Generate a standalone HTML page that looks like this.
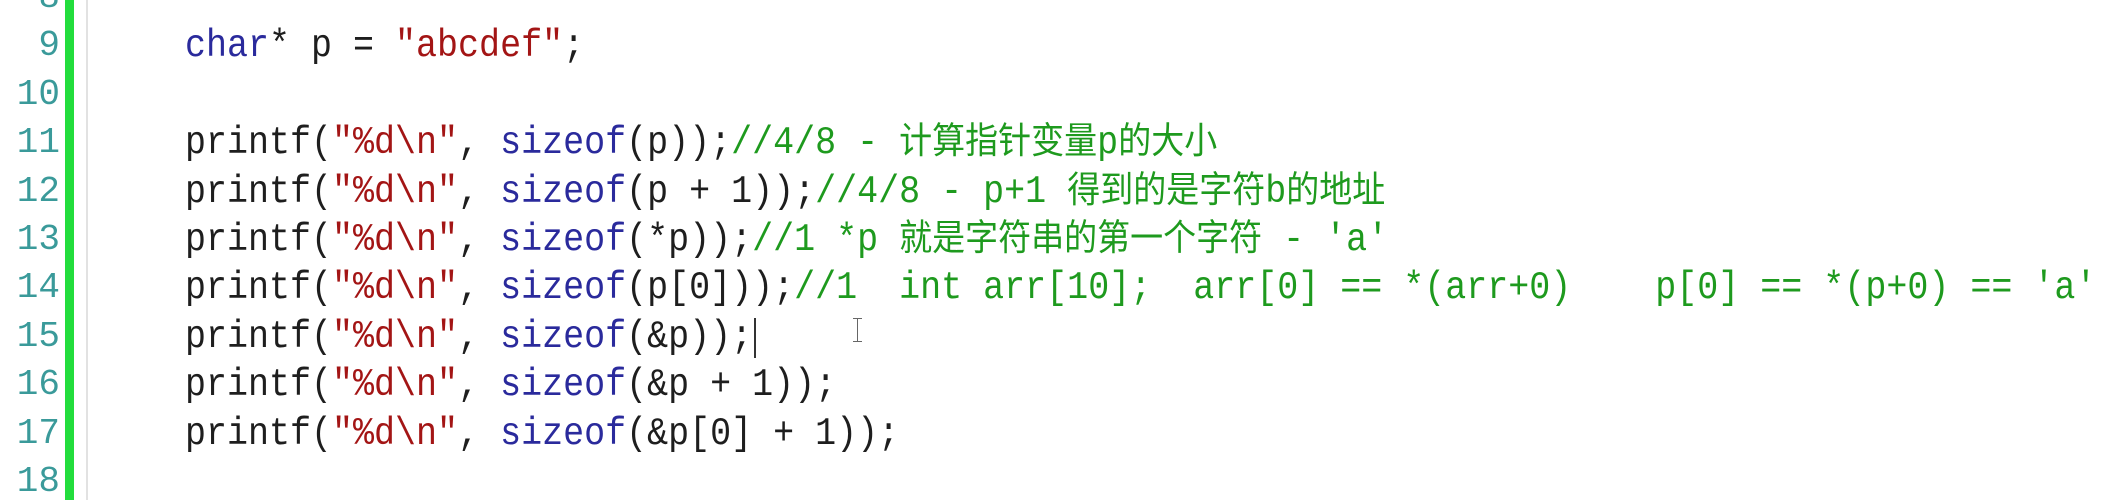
<!DOCTYPE html>
<html><head><meta charset="utf-8"><style>
html,body{margin:0;padding:0;background:#fff;width:2102px;height:500px;overflow:hidden;position:relative}
.ln{position:absolute;left:0;width:60px;text-align:right;font:36px "Liberation Mono",monospace;color:#3a9a9a;line-height:48px;height:48px}
.bar{position:absolute;left:65px;top:0;width:9px;height:500px;background:#22dd3c}
.sep{position:absolute;left:86px;top:0;width:2px;height:500px;background:#e2e2e2}
.l{position:absolute;left:185px;height:48px;font:35px "Liberation Mono",monospace;line-height:48px;white-space:pre;color:#1e1e1e;transform:scaleY(1.1);transform-origin:left center}
.k{color:#2a2a9c}.s{color:#a31515}.c{color:#1e9a1e}
.cj{font-family:"Noto Sans CJK SC",sans-serif;font-size:33px;line-height:1;vertical-align:baseline}
</style></head><body>
<div class="bar"></div><div class="sep"></div>
<div class="ln" style="top:-26px">8</div>
<div class="ln" style="top:22px">9</div>
<div class="ln" style="top:71px">10</div>
<div class="ln" style="top:119px">11</div>
<div class="ln" style="top:168px">12</div>
<div class="ln" style="top:216px">13</div>
<div class="ln" style="top:264px">14</div>
<div class="ln" style="top:313px">15</div>
<div class="ln" style="top:361px">16</div>
<div class="ln" style="top:410px">17</div>
<div class="ln" style="top:458px">18</div>
<div class="l" style="top:22px"><span class="k">char</span>* p = <span class="s">"abcdef"</span>;</div>
<div class="l" style="top:119px">printf(<span class="s">"%d\n"</span>, <span class="k">sizeof</span>(p));<span class="c">//4/8 - <span class="cj">计算指针变量</span>p<span class="cj">的大小</span></span></div>
<div class="l" style="top:168px">printf(<span class="s">"%d\n"</span>, <span class="k">sizeof</span>(p + 1));<span class="c">//4/8 - p+1 <span class="cj">得到的是字符</span>b<span class="cj">的地址</span></span></div>
<div class="l" style="top:216px">printf(<span class="s">"%d\n"</span>, <span class="k">sizeof</span>(*p));<span class="c">//1 *p <span class="cj">就是字符串的第一个字符</span> - 'a'</span></div>
<div class="l" style="top:264px">printf(<span class="s">"%d\n"</span>, <span class="k">sizeof</span>(p[0]));<span class="c">//1  int arr[10];  arr[0] == *(arr+0)    p[0] == *(p+0) == 'a'</span></div>
<div class="l" style="top:313px">printf(<span class="s">"%d\n"</span>, <span class="k">sizeof</span>(&amp;p));</div>
<div class="l" style="top:361px">printf(<span class="s">"%d\n"</span>, <span class="k">sizeof</span>(&amp;p + 1));</div>
<div class="l" style="top:410px">printf(<span class="s">"%d\n"</span>, <span class="k">sizeof</span>(&amp;p[0] + 1));</div>
<div style="position:absolute;left:754px;top:318px;width:2px;height:40px;background:#333"></div>
<div style="position:absolute;left:857px;top:318px;width:1px;height:24px;background:#666"></div>
<div style="position:absolute;left:853px;top:318px;width:9px;height:1px;background:#666"></div>
<div style="position:absolute;left:853px;top:341px;width:9px;height:1px;background:#666"></div>
</body></html>
